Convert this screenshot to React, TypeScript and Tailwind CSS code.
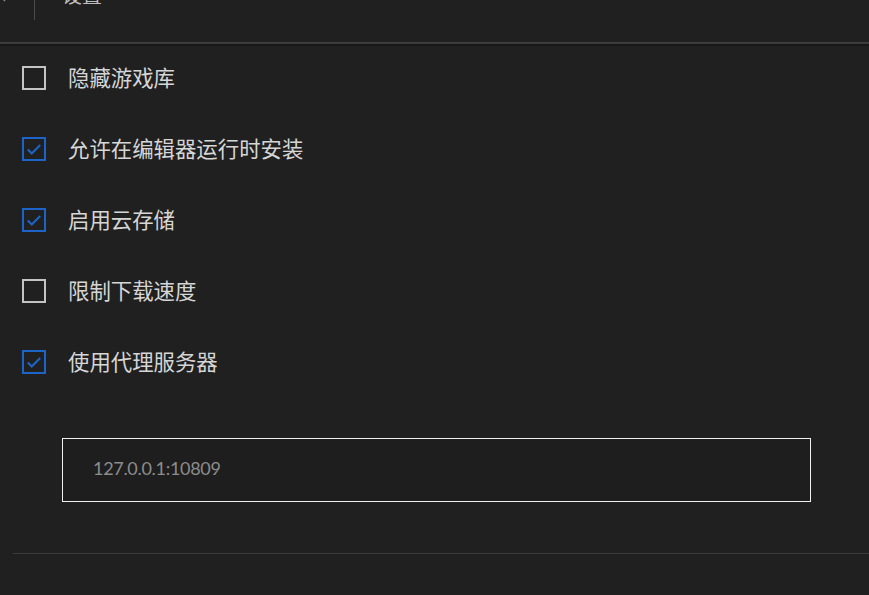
import React, { useState } from "react";

type Option = { id: string; label: string; checked: boolean };

const INITIAL: Option[] = [
  { id: "hide-library", label: "隐藏游戏库", checked: false },
  { id: "allow-install", label: "允许在编辑器运行时安装", checked: true },
  { id: "cloud-save", label: "启用云存储", checked: true },
  { id: "limit-speed", label: "限制下载速度", checked: false },
  { id: "proxy", label: "使用代理服务器", checked: true },
];

const FONT = { fontFamily: '"Noto Sans CJK SC", "Noto Sans", sans-serif' };

const CheckBox: React.FC<{ checked: boolean }> = ({ checked }) => (
  <div
    className={`w-6 h-6 flex items-center justify-center border-2 ${
      checked ? "border-[#1c64c8]" : "border-[#c4c4c4]"
    }`}
  >
    {checked && (
      <svg width="18" height="18" viewBox="0 0 16 16" fill="none">
        <path d="M2.5 8.5 L6 12 L13.5 4.5" stroke="#1c64c8" strokeWidth="1.8" />
      </svg>
    )}
  </div>
);

export default function App() {
  const [options, setOptions] = useState(INITIAL);
  const [proxy, setProxy] = useState("127.0.0.1:10809");

  const toggle = (id: string) =>
    setOptions((prev) => prev.map((o) => (o.id === id ? { ...o, checked: !o.checked } : o)));

  return (
    <div className="w-[869px] h-[595px] overflow-hidden bg-[#202020] text-[#dcdcdc]" style={FONT}>
      {/* top bar, scrolled partly out of view */}
      <div className="h-[42px] bg-[#202020] overflow-hidden">
        <div className="flex items-center h-[40px] -mt-[25px] text-[#bdbdbd]">
          <div className="w-[34px] flex items-center -ml-[6px]">
            <svg width="16" height="16" viewBox="0 0 16 16" fill="none">
              <path d="M11 2 L5 8 L11 14" stroke="#8a8a8a" strokeWidth="1.4" />
            </svg>
          </div>
          <div className="w-px h-[40px] bg-[#4a4a4a] mt-[10px] ml-[6px]" />
          <span className="ml-[27px] text-[20px]">设置</span>
        </div>
      </div>
      <div className="h-[2px] bg-[#3c3c3c]" />
      <div className="h-[3px] bg-gradient-to-b from-[#141414] to-[#202020]" />

      <div className="flex flex-col pt-[16px]">
        {options.map((o) => (
          <button
            key={o.id}
            onClick={() => toggle(o.id)}
            className="flex items-center h-[71px] pl-[22px] text-left cursor-pointer first:-mt-[21px]"
          >
            <CheckBox checked={o.checked} />
            <span className="ml-[22px] text-[21.4px] text-[#d6d6d6]">{o.label}</span>
          </button>
        ))}
      </div>

      <div className="pl-[62px] pr-[58px] mt-[41px]">
        <input
          value={proxy}
          onChange={(e) => setProxy(e.target.value)}
          className="w-[749px] h-[64px] border-[1.5px] border-[#f0f0f0] bg-[#1e1e1e] px-[30px] pb-[4px] text-[18px] tracking-[-0.3px] text-[#8c8c8c] outline-none"
          style={{ fontFamily: 'Lato, "Noto Sans", sans-serif' }}
        />
      </div>

      <div className="ml-[13px] mt-[51px] h-px bg-[#3a3a3a]" />
    </div>
  );
}
